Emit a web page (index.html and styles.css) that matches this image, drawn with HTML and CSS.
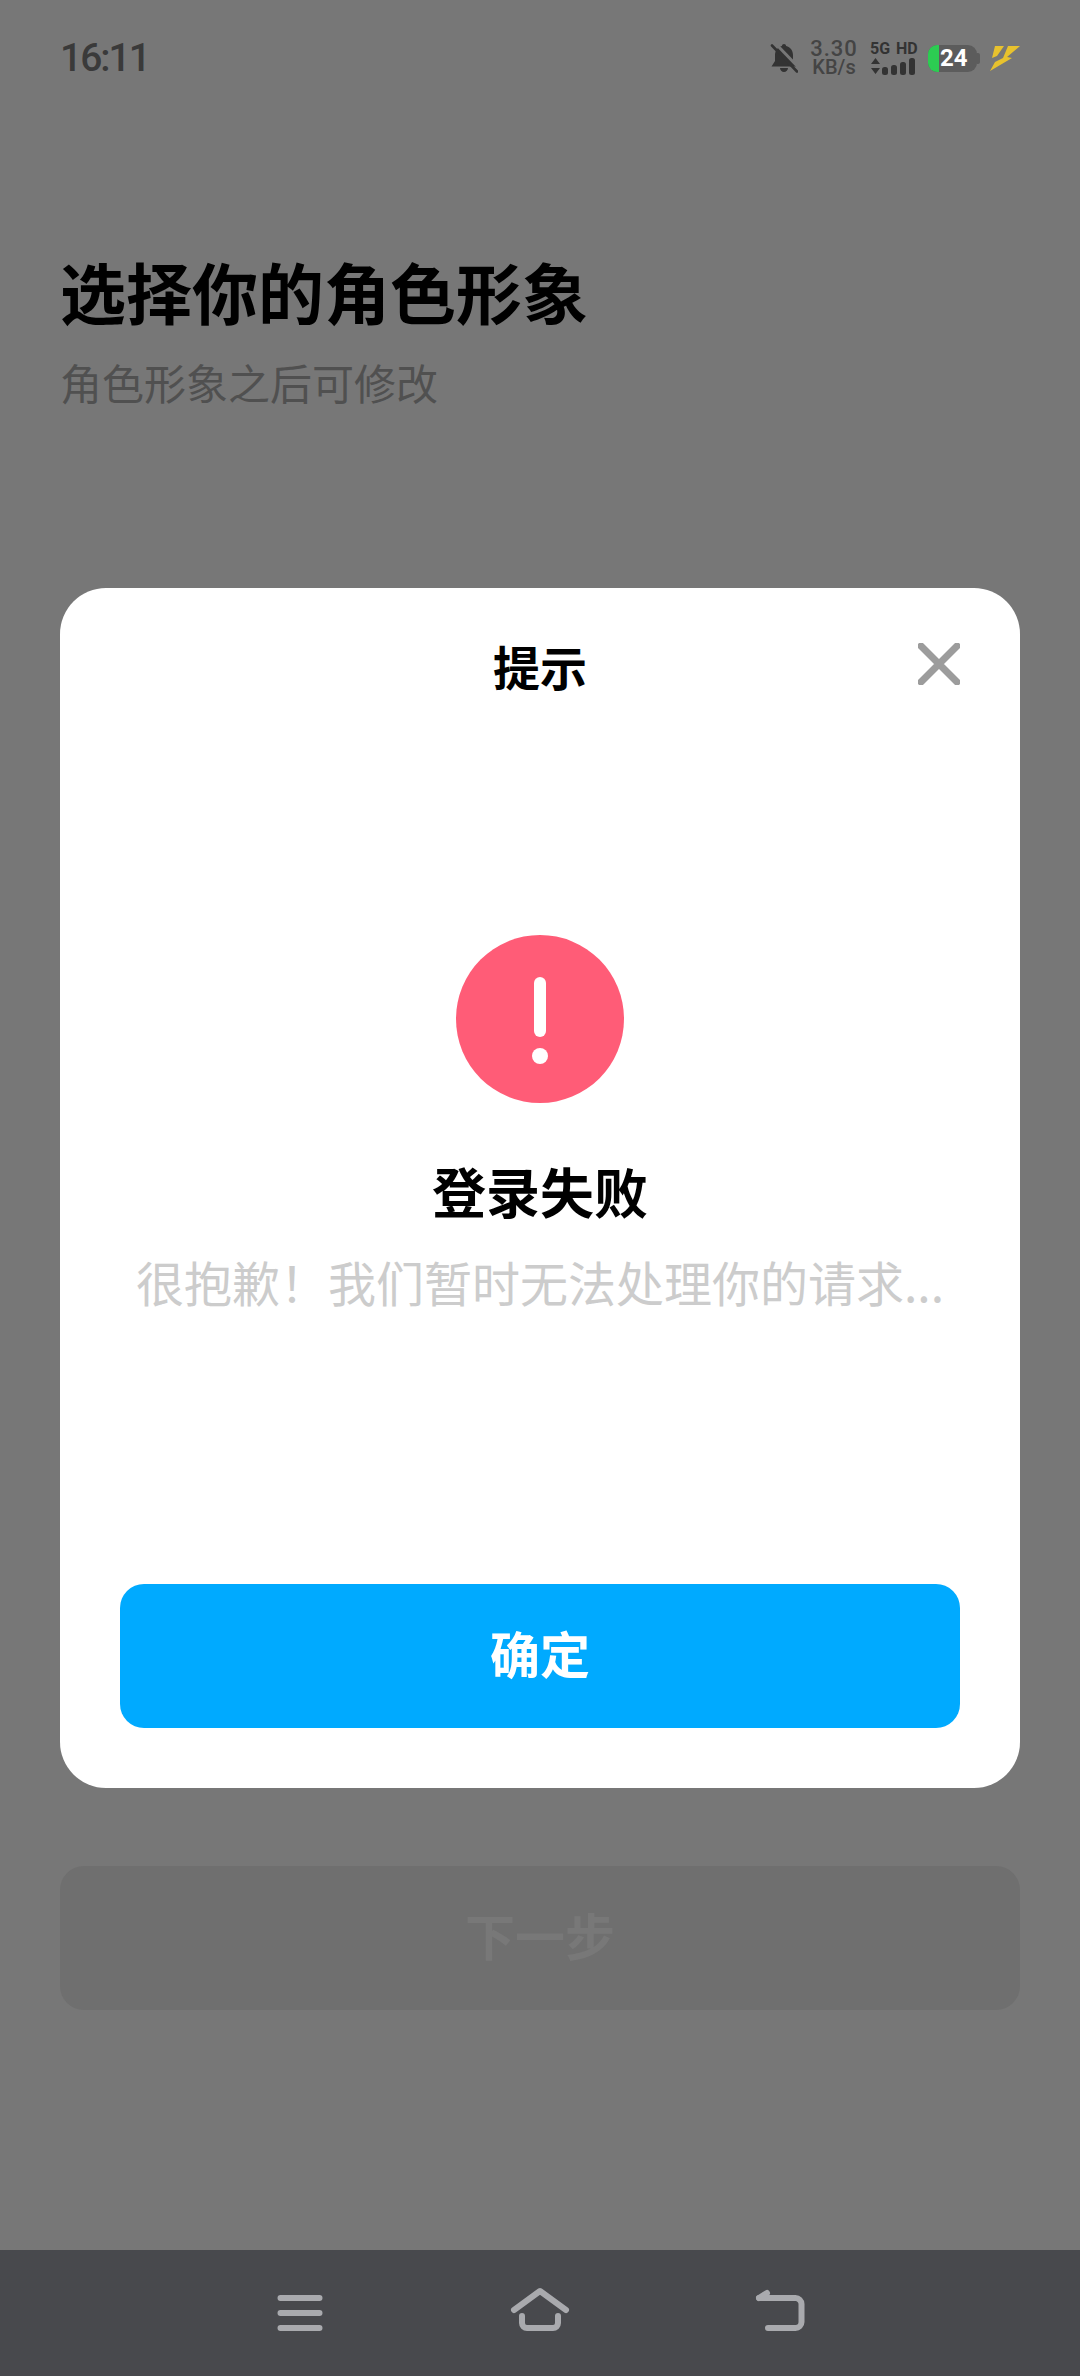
FILE: index.html
```html
<!DOCTYPE html>
<html lang="zh-CN">
<head>
  <meta charset="UTF-8" />
  <meta name="viewport" content="width=device-width, initial-scale=1.0">
  <title>选择你的角色形象</title>
  <link rel="stylesheet" href="styles.css">
</head>
<body>
  <div class="screen">
    <header class="status-bar">
      <span class="time">16:11</span>
      <div class="status-icons">
        <svg class="bell" viewBox="0 0 28 30">
          <path d="M14 1c1.200 0 2 .8 2.100 1.900C20.500 4 23 7.500 23 12v6l3.500 5.500h-25L5 18v-6c0-4.500 2.500-8 6.900-9.100C12 1.800 12.800 1 14 1zM10 25h8c0 2.200-1.800 4-4 4s-4-1.800-4-4z" fill="#333"/>
          <path d="M5 0 30 26" stroke="#777" stroke-width="3"/>
          <path d="M2 2.500 27 28.500" stroke="#333" stroke-width="2.600" stroke-linecap="round"/>
        </svg>
        <div class="speed">
          <span>3.30</span>
          <span class="speed-unit">KB/s</span>
        </div>
        <div class="network">
          <span class="network-label">5G HD</span>
          <svg class="signal" viewBox="0 0 47 17">
            <path d="M5.500 0 10 6H1zM5.500 16 1 10h9z" fill="#333"/>
            <rect x="12" y="9" width="6" height="8" rx="2.500" fill="#333"/>
            <rect x="21" y="7" width="6" height="10" rx="2.500" fill="#333"/>
            <rect x="30" y="4" width="6" height="13" rx="2.500" fill="#333"/>
            <rect x="39" y="0" width="6" height="17" rx="2.500" fill="#333"/>
          </svg>
        </div>
        <div class="battery">
          <div class="battery-body">
            <span class="battery-fill"></span>
            <span class="battery-level">24</span>
          </div>
          <span class="battery-cap"></span>
        </div>
        <svg class="bolt" viewBox="0 0 30 26">
          <path d="M5 1h9L7 11l-5 2zM18 1h12L17 12l5 1L0 26l5-9 8-4z" fill="#e8c22e"/>
        </svg>
      </div>
    </header>

    <main class="content">
      <h1 class="page-title">选择你的角色形象</h1>
      <p class="page-hint">角色形象之后可修改</p>
      <div class="next-button">下一步</div>
    </main>

    <nav class="nav-bar">
      <svg class="nav-icon" viewBox="0 0 60 60">
        <path d="M10.500 15H49.500M10.500 30H49.500M10.500 45H49.500" stroke="#a9aaae" stroke-width="6" stroke-linecap="round" fill="none"/>
      </svg>
      <svg class="nav-icon" viewBox="0 0 60 60">
        <path d="M4 27 30 8l26 19" stroke="#a9aaae" stroke-width="6" stroke-linecap="round" stroke-linejoin="round" fill="none"/>
        <path d="M12 33v7a5 5 0 0 0 5 5h26a5 5 0 0 0 5-5v-7" stroke="#a9aaae" stroke-width="6" stroke-linecap="round" fill="none"/>
      </svg>
      <svg class="nav-icon" viewBox="0 0 60 60">
        <path d="M9 15H45.500a6 6 0 0 1 6 6v18a6 6 0 0 1-6 6H18" stroke="#a9aaae" stroke-width="6" stroke-linecap="round" fill="none"/>
        <path d="M9 15 17 10" stroke="#a9aaae" stroke-width="6" stroke-linecap="round" fill="none"/>
      </svg>
    </nav>

    <div class="overlay">
      <section class="dialog">
        <div class="dialog-head">
          <h2 class="dialog-title">提示</h2>
          <svg class="dialog-close" viewBox="0 0 42 42">
            <path d="M3 3 39 39M39 3 3 39" stroke="#9c9c9c" stroke-width="7" stroke-linecap="round"/>
          </svg>
        </div>
        <div class="dialog-body">
          <div class="alert-icon">
            <span class="alert-bar"></span>
            <span class="alert-dot"></span>
          </div>
          <h3 class="alert-title">登录失败</h3>
          <p class="alert-text">很抱歉&#xFF01;我们暂时无法处理你的请求...</p>
        </div>
        <button class="confirm-button" type="button">确定</button>
      </section>
    </div>
  </div>
</body>
</html>
```

FILE: styles.css
```css
* {
  box-sizing: border-box;
}
html, body {
  margin: 0;
  padding: 0;
}
body {
  font-family: "Noto Sans CJK SC", "Noto Sans", sans-serif;
  background: #777;
}
.screen {
  position: relative;
  width: 1080px;
  height: 2376px;
  display: flex;
  flex-direction: column;
  overflow: hidden;
  background: #777;
}

/* status bar */
.status-bar {
  height: 116px;
  padding: 0 60px;
  display: flex;
  justify-content: space-between;
  align-items: center;
}
.time {
  font-family: Roboto, sans-serif;
  font-size: 39px;
  font-weight: 500;
  letter-spacing: -2px;
  color: #3a3a3a;
}
.status-icons {
  display: flex;
  align-items: center;
}
.bell {
  width: 28px;
  height: 30px;
  margin-right: 12px;
}
.speed {
  width: 48px;
  margin-right: 12px;
  display: flex;
  flex-direction: column;
  align-items: center;
  font-family: Roboto, sans-serif;
  font-size: 22px;
  font-weight: 500;
  letter-spacing: 1px;
  line-height: 19px;
  color: #444;
}
.speed-unit {
  font-size: 20px;
  letter-spacing: 0;
}
.network {
  width: 47px;
  margin-right: 11px;
  display: flex;
  flex-direction: column;
  gap: 3px;
}
.network-label {
  font-family: Roboto, sans-serif;
  font-size: 16px;
  font-weight: 700;
  line-height: 13px;
  word-spacing: 2px;
  white-space: nowrap;
  color: #333;
}
.signal {
  width: 47px;
  height: 17px;
  display: block;
}
.battery {
  display: flex;
  align-items: center;
  margin-right: 10px;
}
.battery-body {
  position: relative;
  width: 49px;
  height: 27px;
  border-radius: 9px;
  background: #5c5c5c;
  overflow: hidden;
}
.battery-fill {
  position: absolute;
  left: 0;
  top: 0;
  bottom: 0;
  width: 11px;
  background: #2ccc52;
}
.battery-level {
  position: absolute;
  left: 12px;
  top: 0;
  font-family: Roboto, sans-serif;
  font-size: 24px;
  font-weight: 700;
  line-height: 27px;
  color: #fff;
}
.battery-cap {
  width: 3px;
  height: 11px;
  border-radius: 0 2px 2px 0;
  background: #5c5c5c;
}
.bolt {
  width: 30px;
  height: 26px;
}

/* page under the dialog */
.content {
  flex: 1;
  padding: 0 60px;
}
.page-title {
  margin: 134px 0 0;
  font-size: 66px;
  font-weight: 700;
  line-height: 80px;
  color: #000;
}
.page-hint {
  margin: 22px 0 0;
  font-size: 42px;
  line-height: 60px;
  color: #505050;
}
.next-button {
  margin-top: 1454px;
  height: 144px;
  padding-bottom: 8px;
  display: flex;
  align-items: center;
  justify-content: center;
  border-radius: 24px;
  background: #6f6f6f;
  font-size: 50px;
  font-weight: 700;
  color: #787878;
}

/* bottom nav */
.nav-bar {
  height: 126px;
  padding: 0 270px;
  display: flex;
  justify-content: space-between;
  align-items: center;
  background: #48494d;
}
.nav-icon {
  width: 60px;
  height: 60px;
}

/* dialog */
.overlay {
  position: absolute;
  inset: 0;
  padding: 0 60px;
  display: flex;
  align-items: center;
}
.dialog {
  width: 100%;
  height: 1200px;
  padding: 0 60px 60px;
  display: flex;
  flex-direction: column;
  border-radius: 46px;
  background: #fff;
}
.dialog-head {
  position: relative;
  height: 162px;
  padding-bottom: 6px;
  display: flex;
  justify-content: center;
  align-items: center;
}
.dialog-title {
  margin: 0;
  font-size: 47px;
  font-weight: 700;
  line-height: 64px;
  color: #000;
}
.dialog-close {
  position: absolute;
  right: 0;
  top: 55px;
  width: 42px;
  height: 42px;
}
.dialog-body {
  flex: 1;
  padding-top: 185px;
  display: flex;
  flex-direction: column;
  align-items: center;
}
.alert-icon {
  width: 168px;
  height: 168px;
  padding-top: 42px;
  display: flex;
  flex-direction: column;
  align-items: center;
  gap: 11px;
  border-radius: 50%;
  background: #ff5c77;
}
.alert-bar {
  width: 12px;
  height: 60px;
  border-radius: 6px;
  background: #fff;
}
.alert-dot {
  width: 16px;
  height: 16px;
  border-radius: 50%;
  background: #fff;
}
.alert-title {
  margin: 53px 0 0;
  font-size: 54px;
  font-weight: 700;
  line-height: 70px;
  color: #000;
}
.alert-text {
  margin: 20px 0 0;
  font-size: 48px;
  line-height: 70px;
  white-space: nowrap;
  color: #ccc;
}
.confirm-button {
  height: 144px;
  padding: 0 0 8px;
  border: none;
  border-radius: 24px;
  background: #00aaff;
  font-family: inherit;
  font-size: 50px;
  font-weight: 700;
  color: #fff;
}
```
